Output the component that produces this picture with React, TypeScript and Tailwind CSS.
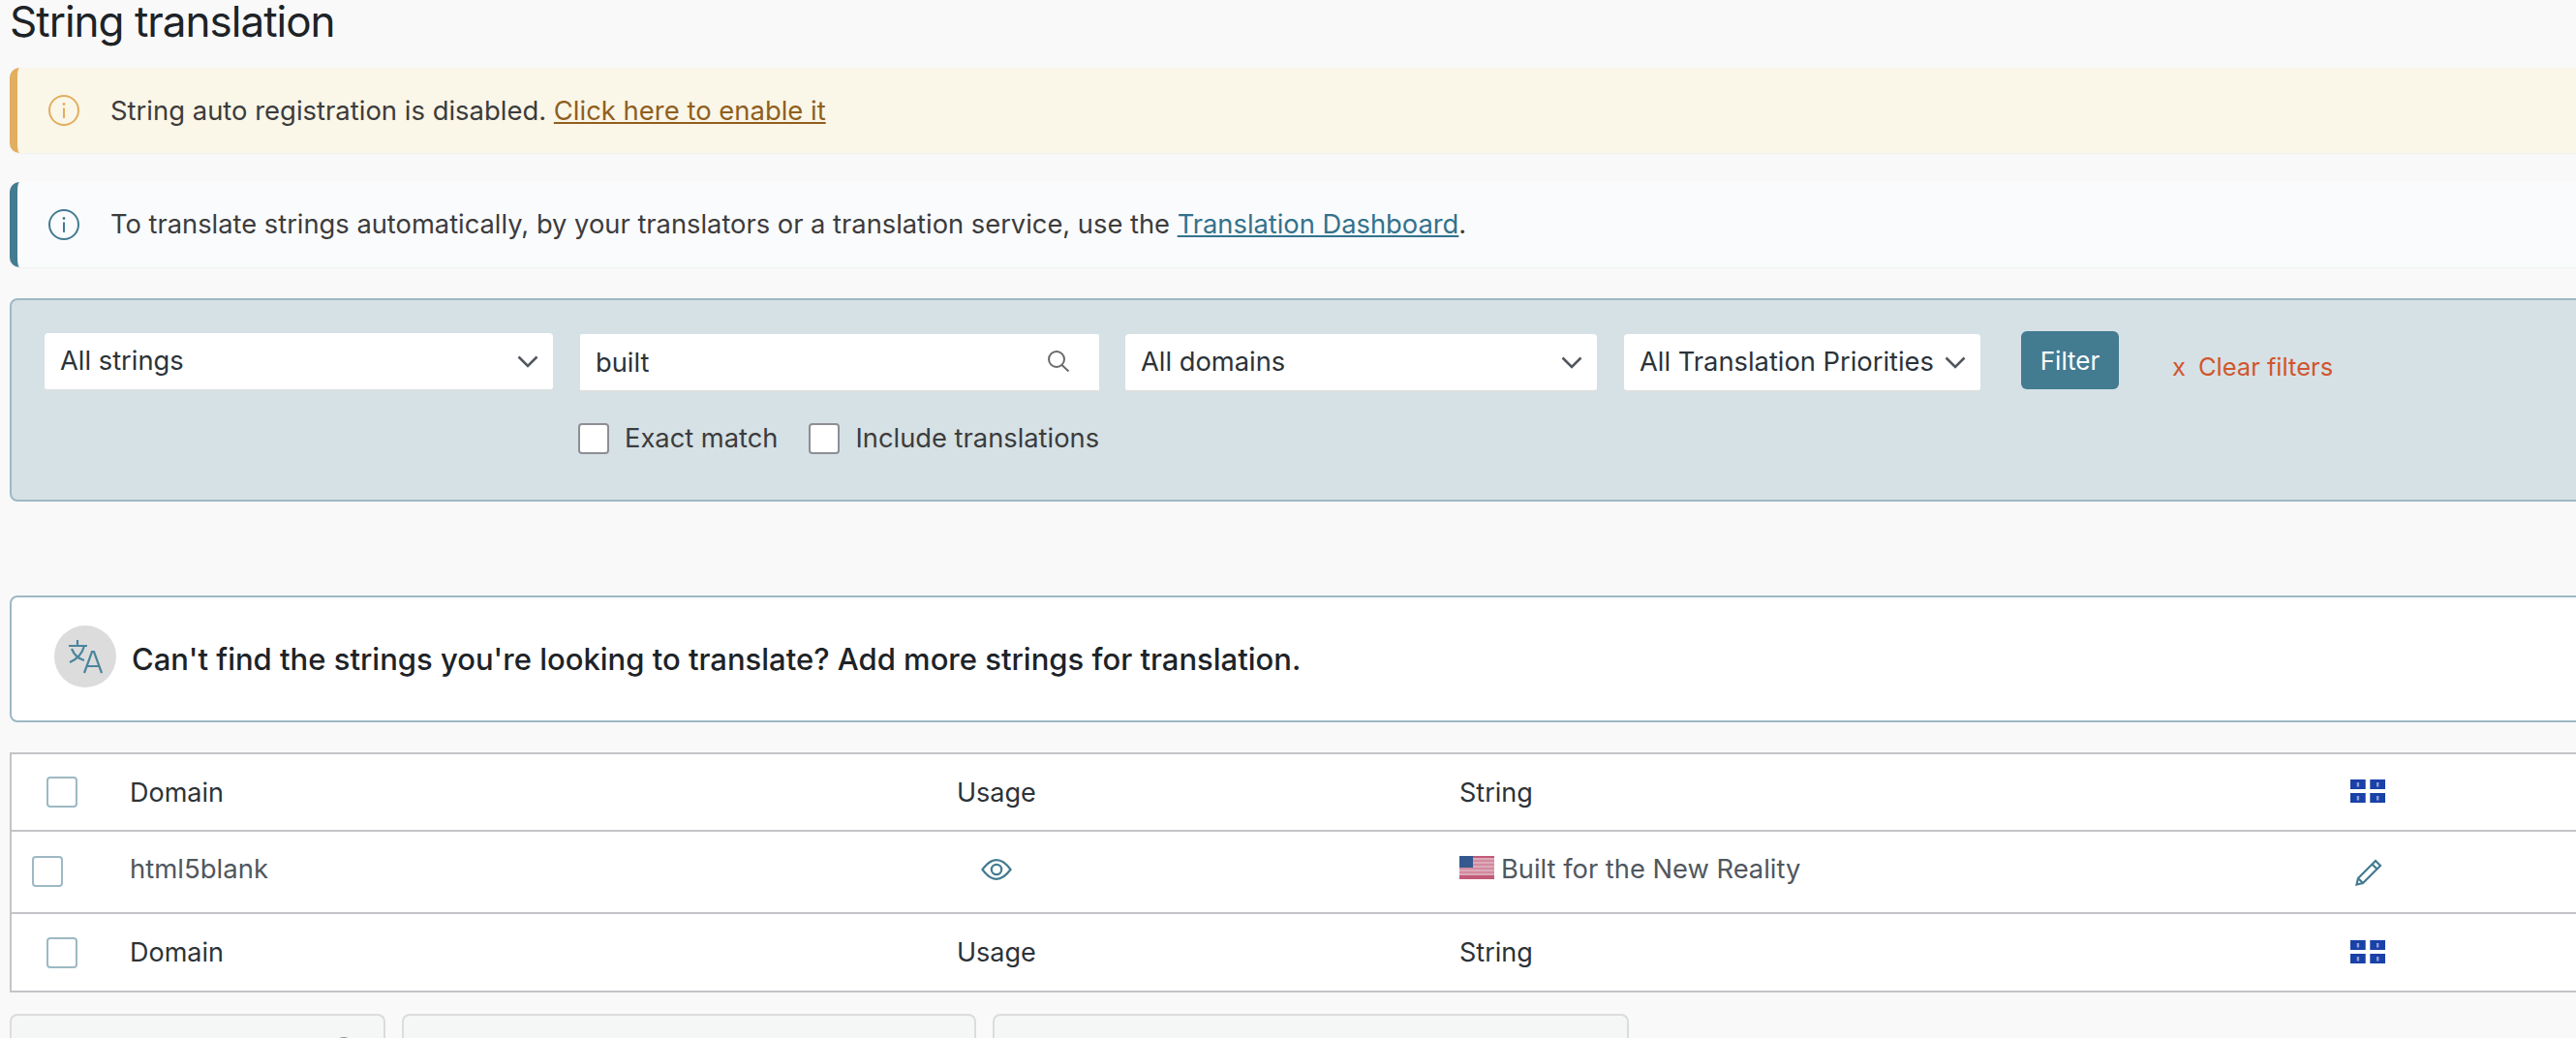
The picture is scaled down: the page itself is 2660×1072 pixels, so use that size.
import React from "react";

const Chevron = () => (
  <svg className="shrink-0" width="22" height="13" viewBox="0 0 22 13" fill="none" stroke="#50575e" strokeWidth="2.6">
    <path d="M1.5 1.5 L11 11 L20.5 1.5" />
  </svg>
);

const InfoIcon = ({ color }: { color: string }) => (
  <svg width="32" height="32" viewBox="0 0 32 32" fill="none" className="shrink-0">
    <circle cx="16" cy="16" r="15" stroke={color} strokeWidth="2" />
    <path d="M16 13.5 V24" stroke={color} strokeWidth="2" />
    <circle cx="16" cy="9.5" r="1.4" fill={color} />
  </svg>
);

const QuebecFlag = ({ className = "" }: { className?: string }) => (
  <svg className={className} width="36" height="24" viewBox="0 0 36 24">
    <g className="blur-[0.4px]">
      <rect width="36" height="24" fill="#fff" />
      <rect width="15.7" height="10" fill="#1a41a8" />
      <rect x="20.3" width="15.7" height="10" fill="#1a41a8" />
      <rect y="14" width="15.7" height="10" fill="#1a41a8" />
      <rect x="20.3" y="14" width="15.7" height="10" fill="#1a41a8" />
      <g fill="#8da1d6">
        <rect x="6.7" y="3" width="2.4" height="4.5" />
        <rect x="27" y="3" width="2.4" height="4.5" />
        <rect x="6.7" y="17" width="2.4" height="4.5" />
        <rect x="27" y="17" width="2.4" height="4.5" />
      </g>
    </g>
  </svg>
);

const USFlag = () => (
  <svg width="36" height="24" viewBox="0 0 36 24" className="shrink-0">
    <g className="blur-[0.3px]">
      <rect width="36" height="24" fill="#dcaab8" />
      {[0, 4, 8, 12, 16, 20].map((y) => (
        <rect key={y} y={y} width="36" height="2" fill={y === 0 || y === 20 ? "#c25a78" : "#d38aa0"} />
      ))}
      <rect y="22" width="36" height="2" fill="#c25a78" />
      <rect width="14" height="12" fill="#34598f" />
    </g>
  </svg>
);

const Checkbox = ({ border = "border-[#9db9c4]" }: { border?: string }) => (
  <span className={`block w-[32px] h-[32px] bg-white border-2 ${border} rounded-[4px] shrink-0`} />
);

const Select = ({ label, className }: { label: string; className: string }) => (
  <div className={`flex items-center justify-between bg-white rounded-[4px] border-b-2 border-[#dcdfe0] pl-[16px] pr-[15px] ${className}`}>
    <span className="text-[27.3px] text-[#2c3338] whitespace-nowrap">{label}</span>
    <Chevron />
  </div>
);

const Banner = ({ bg, bar, icon, size, children }: { bg: string; bar: string; icon: string; size: string; children: React.ReactNode }) => (
  <div className={`flex items-center h-[88px] rounded-l-[10px] border-l-[8px] ${bg} ${bar} pl-[32px] gap-[32px] shadow-[0_1px_2px_rgba(0,0,0,0.04)]`}>
    <InfoIcon color={icon} />
    <p className={`mt-[1px] ${size} text-[#3c3c3c] whitespace-nowrap`}>{children}</p>
  </div>
);

const rowGrid = "grid grid-cols-[122px_854px_519px_920px_1fr] items-center";

const TableHeader = ({ top = false }: { top?: boolean }) => (
  <div className={`${rowGrid} ${top ? "h-[80px] border-b-2 border-[#c3c4c7]" : "h-[79px]"}`}>
    <div className="pl-[36px]"><Checkbox /></div>
    <span className="mt-[2px] text-[27px] text-[#2c3338]">Domain</span>
    <span className="mt-[2px] text-[27px] text-[#2c3338]">Usage</span>
    <span className="mt-[2px] text-[27px] text-[#2c3338]">String</span>
    <QuebecFlag className="-mt-[2px]" />
  </div>
);

export default function App() {
  return (
    <div className="w-[2660px] h-[1072px] overflow-hidden bg-[#f9f9f9] font-['Inter','Liberation_Sans',sans-serif]">
      <div className="w-[2700px] pl-[10px]">
        <h1 className="h-[46px] text-[44px] leading-[44px] tracking-[-1px] text-[#1d2327]">String translation</h1>
        <div className="mt-[24px]">
          <Banner bg="bg-[#faf6e8]" bar="border-[#e2ae5f]" icon="#e2ae5f" size="text-[27.45px]">
            String auto registration is disabled.{" "}
            <a className="text-[#8f5f1e] underline">Click here to enable it</a>
          </Banner>
        </div>
        <div className="mt-[30px]">
          <Banner bg="bg-[#fafbfd]" bar="border-[#437b91]" icon="#437b91" size="text-[27.3px]">
            To translate strings automatically, by your translators or a translation service, use the{" "}
            <a className="text-[#33728c] underline">Translation Dashboard</a>.
          </Banner>
        </div>

        <div className="mt-[32px] h-[210px] bg-[#d6e1e5] border-2 border-[#9db9c4] rounded-[8px] pl-[34px] pt-[34px]">
          <div className="flex items-start">
            <Select label="All strings" className="w-[525px] h-[60px]" />
            <div className="ml-[28px] w-[536px]">
              <div className="flex items-center justify-between bg-white h-[60px] mt-[1px] border-b-2 border-[#dcdfe0] pl-[16px] pr-[30px] rounded-[2px]">
                <span className="mt-[3px] text-[27.3px] text-[#2c3338]">built</span>
                <svg width="23" height="22" viewBox="0 0 23 22" fill="none" stroke="#6a6a6a" strokeWidth="2" className="-mt-[2px]">
                  <circle cx="9" cy="9" r="8" />
                  <path d="M14.5 15 L21.5 21.5" />
                </svg>
              </div>
              <div className="flex items-center mt-[28px] -ml-[2px]">
                <Checkbox border="border-[#8c8f94]" />
                <span className="ml-[16px] text-[27.3px] text-[#3c3c3c] whitespace-nowrap">Exact match</span>
                <span className="ml-[32px]"><Checkbox border="border-[#8c8f94]" /></span>
                <span className="ml-[16px] text-[27.3px] text-[#3c3c3c] whitespace-nowrap">Include translations</span>
              </div>
            </div>
            <Select label="All domains" className="ml-[27px] mt-[1px] w-[487px] h-[60px]" />
            <Select label="All Translation Priorities" className="ml-[28px] mt-[1px] w-[368px] h-[60px]" />
            <button className="ml-[42px] -mt-[2px] w-[101px] h-[60px] bg-[#437b91] text-white text-[26px] rounded-[6px]">Filter</button>
            <a className="ml-[55px] mt-[16px] text-[25.5px] text-[#d1552e] whitespace-nowrap">
              x<span className="ml-[13px]">Clear filters</span>
            </a>
          </div>
        </div>

        <div className="mt-[97px] flex items-center h-[131px] bg-white border-2 border-[#9db9c4] rounded-[8px] pl-[44px] gap-[16px]">
          <span className="flex items-center justify-center w-[64px] h-[64px] rounded-full bg-[#dcdcdc] -mt-[6px] shrink-0">
            <svg width="36" height="36" viewBox="0 0 36 36" fill="none" stroke="#4a859c" strokeWidth="2.2">
              <path d="M1 7 H20 M10 1 V7 M17 7 C15 15 9 21 2 24 M4 10 C6 15 10 20 17 22" />
              <path d="M17 35 L25 13 H27 L35 35 M20 28 H32" />
            </svg>
          </span>
          <span className="mt-[1px] text-[31px] font-medium text-[#1d2327] whitespace-nowrap">
            Can't find the strings you're looking to translate? Add more strings for translation.
          </span>
        </div>

        <div className="mt-[31px] bg-white border-2 border-[#c3c4c7]">
          <TableHeader top />
          <div className={`${rowGrid} h-[85px] border-b-2 border-[#c3c4c7]`}>
            <div className="pl-[21px] -mt-[2px]"><Checkbox /></div>
            <span className="text-[27.5px] text-[#50575e] -mt-[6px]">html5blank</span>
            <span className="pl-[25px] -mt-[5px]">
              <svg width="32" height="22" viewBox="0 0 32 22" fill="none" stroke="#437b91" strokeWidth="2.2">
                <path d="M1.5 11 C7 3.5 11 1.2 16 1.2 C21 1.2 25 3.5 30.5 11 C25 18.5 21 20.8 16 20.8 C11 20.8 7 18.5 1.5 11 Z" />
                <circle cx="16" cy="11" r="5.2" />
              </svg>
            </span>
            <span className="flex items-center gap-[7px] text-[27.3px] text-[#50575e] -mt-[5px]">
              <span className="-mt-[4px]"><USFlag /></span>
              Built for the New Reality
            </span>
            <span className="pl-[5px]">
              <svg width="28" height="28" viewBox="0 0 28 28" fill="none" stroke="#437b91" strokeWidth="2.2">
                <path d="M21 2 L26 7 L8 25 L1.5 26.5 L3 20 Z M17.5 5.5 L22.5 10.5 M3 20 L8 25" />
              </svg>
            </span>
          </div>
          <TableHeader />
        </div>

        <div className="mt-[22px] flex gap-[17px] h-[40px]">
          <div className="relative w-[388px] bg-[#f5f7f7] border-2 border-b-0 border-[#dcdcde] rounded-t-[8px] shrink-0">
            <svg className="absolute left-[332px] top-[21px]" width="22" height="22" viewBox="0 0 22 22" fill="none" stroke="#8c8f94" strokeWidth="2">
              <circle cx="11" cy="11" r="9" />
            </svg>
          </div>
          <div className="w-[593px] bg-[#f5f7f7] border-2 border-b-0 border-[#dcdcde] rounded-t-[8px] shrink-0" />
          <div className="w-[657px] bg-[#f5f7f7] border-2 border-b-0 border-[#dcdcde] rounded-t-[8px] shrink-0" />
        </div>
      </div>
    </div>
  );
}
